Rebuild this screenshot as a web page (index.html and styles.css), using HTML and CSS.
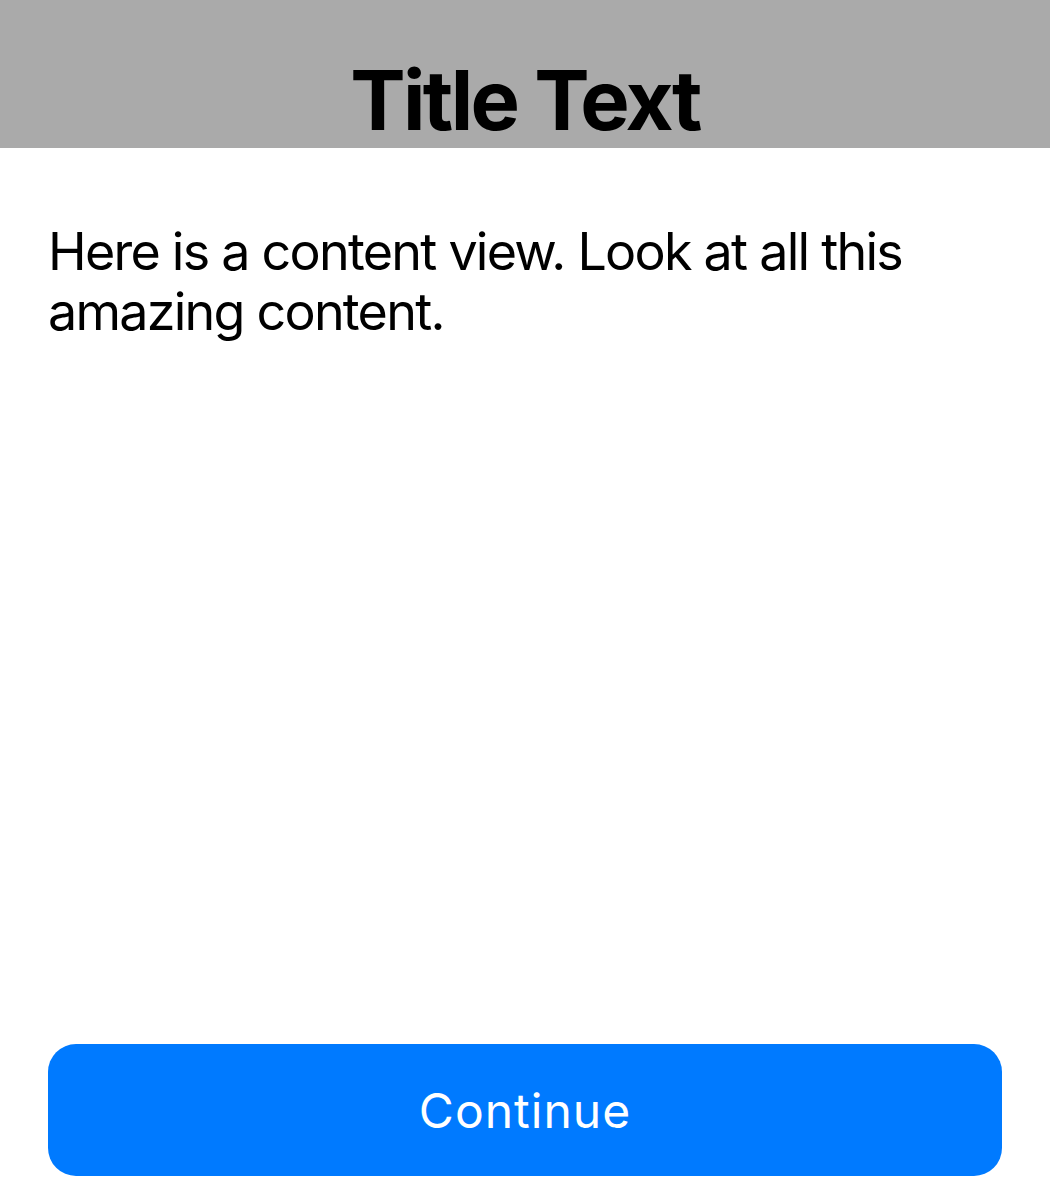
FILE: index.html
```html
<!DOCTYPE html>
<html>
<head>
<meta charset="utf-8">
<link rel="stylesheet" href="styles.css">
</head>
<body>
<div class="screen">
  <header class="header"><h1 class="title">Title Text</h1></header>
  <main class="content">
    <p class="text">Here is a content view. Look at all this amazing content.</p>
  </main>
  <footer class="footer"><button class="btn">Continue</button></footer>
</div>
</body>
</html>
```
FILE: styles.css
```css
html, body { margin: 0; padding: 0; background: #fff; }
body { font-family: Inter, "Noto Sans", sans-serif; color: #000; }
.screen { width: 1050px; height: 1200px; display: flex; flex-direction: column; }
.header { height: 148px; background: #aaaaaa; display: flex; align-items: flex-end; justify-content: center; }
.title { margin: 0 0 6px; font-size: 83px; font-weight: 700; line-height: 1; letter-spacing: -2.7px; }
.content { flex: 1; padding: 0 48px; }
.text { margin: 74px 0 0; font-size: 52px; line-height: 60px; font-weight: 400; letter-spacing: -1.75px; }
.footer { padding: 0 48px 24px; }
.btn { width: 100%; height: 132px; border: 0; border-radius: 28px; background: #007aff; color: #fff; font-family: Inter, "Noto Sans", sans-serif; font-size: 48px; font-weight: 400; letter-spacing: 1px; padding: 0; }
```
